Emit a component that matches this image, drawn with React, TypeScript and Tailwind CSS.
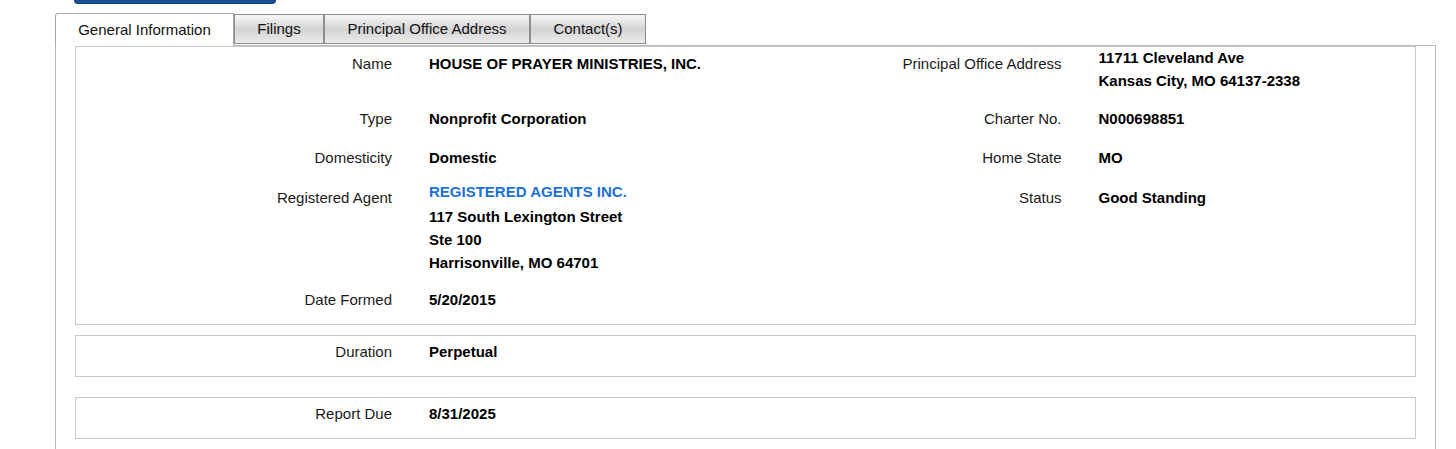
const TABS = ["Filings", "Principal Office Address", "Contact(s)"];
const TAB_W: Record<string, string> = {
  Filings: "w-[90px]",
  "Principal Office Address": "w-[206px]",
  "Contact(s)": "w-[116px]",
};

function Label({ children }: { children: React.ReactNode }) {
  return (
    <div className="w-[316px] shrink-0 text-right pt-[5px] leading-[23px] text-[#1a1a1a]">
      {children}
    </div>
  );
}

function Value({ children, multi }: { children: React.ReactNode; multi?: boolean }) {
  return (
    <div className={`ml-[37px] font-bold leading-[23px] text-black ${multi ? "-mt-px" : "pt-[5px]"}`}>
      {children}
    </div>
  );
}

function Half({ children }: { children: React.ReactNode }) {
  return <div className="w-1/2 flex">{children}</div>;
}

export default function App() {
  return (
    <div className="w-[1456px] h-[449px] overflow-hidden bg-white font-['Liberation_Sans',Arial,sans-serif] text-[15px]">
      <div className="ml-[74px] w-[202px] h-[4px] bg-[#1f4e9a] border-x border-b border-[#17407f] rounded-b-[5px]" />

      <div className="ml-[55px] mt-[9px] w-[1381px]">
        {/* tab strip */}
        <div className="flex items-end h-[33px] border-b border-[#b8b8b8]">
          <div className="w-[179px] h-[33px] -mb-px bg-white border-l border-t border-r border-[#a6a6a6] rounded-tl-[3px] flex items-center justify-center text-[15px] text-[#111] relative z-10">
            General Information
          </div>
          {TABS.map((t) => (
            <div
              key={t}
              className={`${TAB_W[t]} h-[30px] mb-[1px] bg-linear-to-b from-[#f8f8f8] via-[#d3d3d3] to-[#ebebeb] border border-[#8d8d8d] flex items-center justify-center text-[15px] text-[#111]`}
            >
              {t}
            </div>
          ))}
        </div>

        {/* panel */}
        <div className="border-x border-[#b8b8b8] px-[19px] pb-[40px]">
          <div className="border border-[#c8c8c8]">
            <div className="flex h-[55px]">
              <Half>
                <Label>Name</Label>
                <Value>HOUSE OF PRAYER MINISTRIES, INC.</Value>
              </Half>
              <Half>
                <Label>Principal Office Address</Label>
                <Value multi>
                  <div>11711 Cleveland Ave</div>
                  <div>Kansas City, MO 64137-2338</div>
                </Value>
              </Half>
            </div>
            <div className="flex h-[39px]">
              <Half>
                <Label>Type</Label>
                <Value>Nonprofit Corporation</Value>
              </Half>
              <Half>
                <Label>Charter No.</Label>
                <Value>N000698851</Value>
              </Half>
            </div>
            <div className="flex h-[40px]">
              <Half>
                <Label>Domesticity</Label>
                <Value>Domestic</Value>
              </Half>
              <Half>
                <Label>Home State</Label>
                <Value>MO</Value>
              </Half>
            </div>
            <div className="flex h-[102px]">
              <Half>
                <Label>Registered Agent</Label>
                <Value multi>
                  <div className="text-[#1b6fd8] mb-[2px]">REGISTERED AGENTS INC.</div>
                  <div>117 South Lexington Street</div>
                  <div>Ste 100</div>
                  <div>Harrisonville, MO 64701</div>
                </Value>
              </Half>
              <Half>
                <Label>Status</Label>
                <Value>Good Standing</Value>
              </Half>
            </div>
            <div className="flex h-[41px]">
              <Half>
                <Label>Date Formed</Label>
                <Value>5/20/2015</Value>
              </Half>
            </div>
          </div>

          <div className="mt-[10px] border border-[#c8c8c8] h-[42px] flex">
            <div className="w-[316px] shrink-0 text-right pt-[4px] leading-[23px] text-[#1a1a1a]">Duration</div>
            <div className="ml-[37px] pt-[4px] leading-[23px] font-bold">Perpetual</div>
          </div>

          <div className="mt-[20px] border border-[#c8c8c8] h-[42px] flex">
            <div className="w-[316px] shrink-0 text-right pt-[4px] leading-[23px] text-[#1a1a1a]">Report Due</div>
            <div className="ml-[37px] pt-[4px] leading-[23px] font-bold">8/31/2025</div>
          </div>
        </div>
      </div>
    </div>
  );
}
